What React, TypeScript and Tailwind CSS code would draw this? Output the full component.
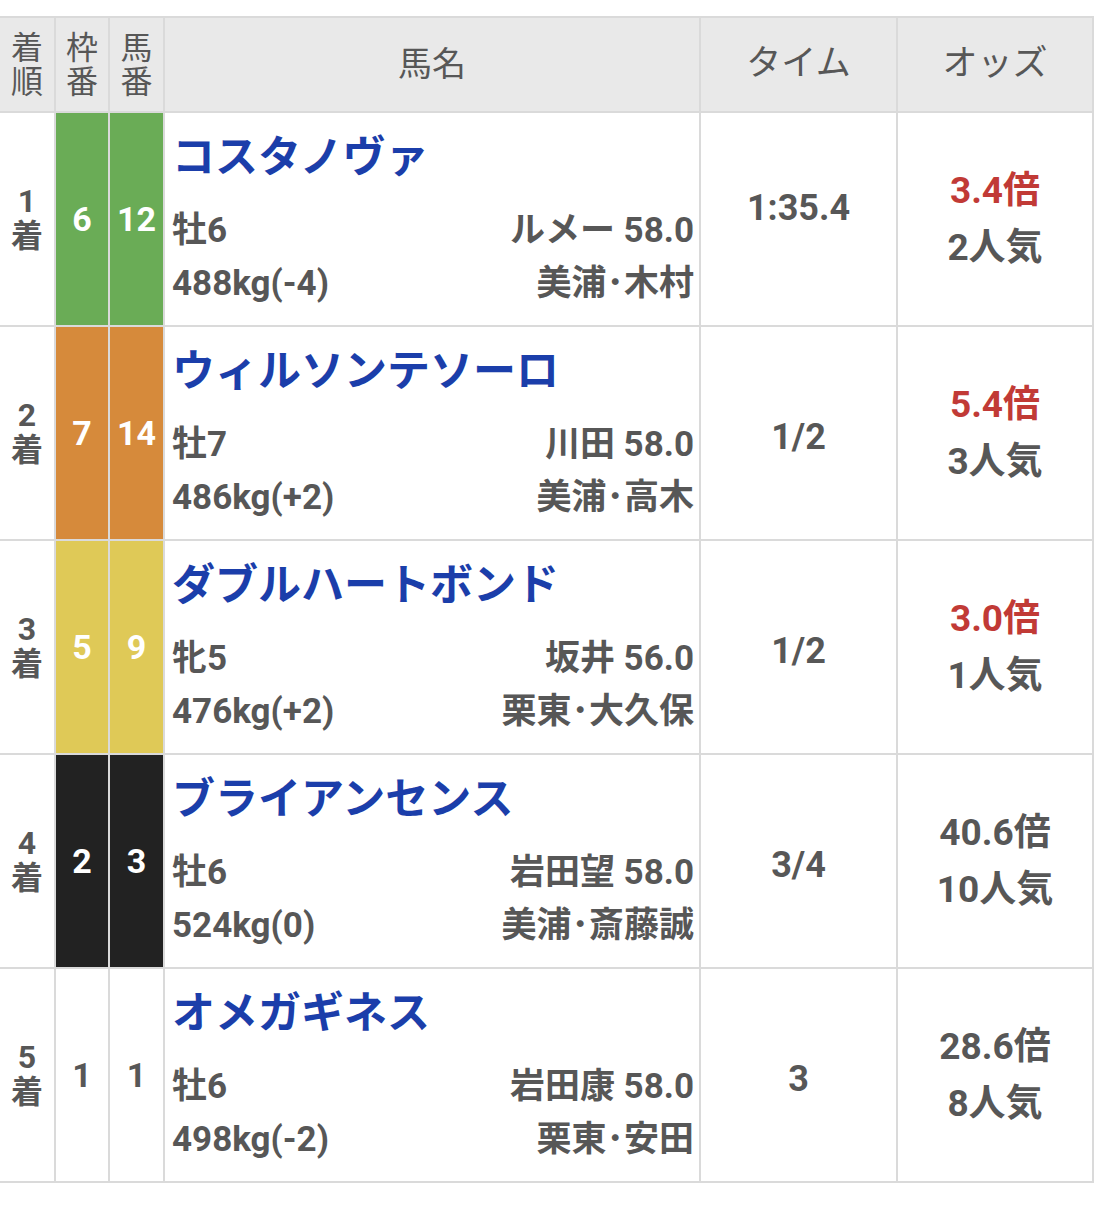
import React from "react";

type Row = {
  rank: string;
  waku: string;
  uma: string;
  color: string;
  name: string;
  sex: string;
  jockey: string;
  weight: string;
  stable: string;
  time: string;
  odds: string;
  pop: string;
  fav: boolean;
  timeLift?: boolean;
};

const rows: Row[] = [
  { rank: "1", waku: "6", uma: "12", color: "bg-[#6aac56]", name: "コスタノヴァ", sex: "牡6", jockey: "ルメー 58.0", weight: "488kg(-4)", stable: "美浦･木村", time: "1:35.4", odds: "3.4倍", pop: "2人気", fav: true, timeLift: true },
  { rank: "2", waku: "7", uma: "14", color: "bg-[#d68a3b]", name: "ウィルソンテソーロ", sex: "牡7", jockey: "川田 58.0", weight: "486kg(+2)", stable: "美浦･高木", time: "1/2", odds: "5.4倍", pop: "3人気", fav: true },
  { rank: "3", waku: "5", uma: "9", color: "bg-[#dfc957]", name: "ダブルハートボンド", sex: "牝5", jockey: "坂井 56.0", weight: "476kg(+2)", stable: "栗東･大久保", time: "1/2", odds: "3.0倍", pop: "1人気", fav: true },
  { rank: "4", waku: "2", uma: "3", color: "bg-[#222222]", name: "ブライアンセンス", sex: "牡6", jockey: "岩田望 58.0", weight: "524kg(0)", stable: "美浦･斎藤誠", time: "3/4", odds: "40.6倍", pop: "10人気", fav: false },
  { rank: "5", waku: "1", uma: "1", color: "bg-white", name: "オメガギネス", sex: "牡6", jockey: "岩田康 58.0", weight: "498kg(-2)", stable: "栗東･安田", time: "3", odds: "28.6倍", pop: "8人気", fav: false },
];

const font = { fontFamily: "Roboto, 'Noto Sans CJK JP', sans-serif" };

export default function App() {
  return (
    <div className="bg-white w-[1096px] h-[1214px] pt-[16px]" style={font}>
      <div className="w-[1094px] border-t-2 border-[#dadada] grid grid-cols-[56px_54px_55px_536px_197px_196px] text-[#575757]">
        {/* header */}
        <div className="h-[95px] bg-[#e9e9e9] border-r-2 border-b-2 border-[#dadada] flex flex-col items-center justify-center text-[32px] leading-[34px]">
          <span>着</span>
          <span>順</span>
        </div>
        <div className="h-[95px] bg-[#e9e9e9] border-r-2 border-b-2 border-[#dadada] flex flex-col items-center justify-center text-[32px] leading-[34px]">
          <span>枠</span>
          <span>番</span>
        </div>
        <div className="h-[95px] bg-[#e9e9e9] border-r-2 border-b-2 border-[#dadada] flex flex-col items-center justify-center text-[32px] leading-[34px]">
          <span>馬</span>
          <span>番</span>
        </div>
        <div className="h-[95px] bg-[#e9e9e9] border-r-2 border-b-2 border-[#dadada] flex items-center justify-center text-[34px]">
          馬名
        </div>
        <div className="h-[95px] bg-[#e9e9e9] border-r-2 border-b-2 border-[#dadada] flex items-center justify-center text-[35px]">
          タイム
        </div>
        <div className="h-[95px] bg-[#e9e9e9] border-r-2 border-b-2 border-[#dadada] flex items-center justify-center text-[35px]">
          オッズ
        </div>

        {rows.map((r) => (
          <React.Fragment key={r.rank}>
            <div className="h-[214px] border-r-2 border-b-2 border-[#dadada] flex flex-col items-center justify-center font-bold text-[32px] leading-[35px]">
              <span>{r.rank}</span>
              <span>着</span>
            </div>
            <div className={`h-[214px] border-r-2 border-b-2 border-[#dadada] flex items-center justify-center font-bold text-[34px] ${r.color} ${r.waku === "1" ? "text-[#575757]" : "text-white"}`}>
              {r.waku}
            </div>
            <div className={`h-[214px] border-r-2 border-b-2 border-[#dadada] flex items-center justify-center font-bold text-[34px] ${r.color} ${r.waku === "1" ? "text-[#575757]" : "text-white"}`}>
              {r.uma}
            </div>
            <div className="h-[214px] border-r-2 border-b-2 border-[#dadada] flex flex-col pl-[7px] pr-[5px] pt-[16px] font-bold">
              <div className="text-[43px] leading-[56px] text-[#1b3eaa] whitespace-nowrap">{r.name}</div>
              <div className="mt-[19px] flex justify-between text-[35px] leading-[53px]">
                <span>{r.sex}</span>
                <span>{r.jockey}</span>
              </div>
              <div className="flex justify-between text-[35px] leading-[53px]">
                <span>{r.weight}</span>
                <span>{r.stable}</span>
              </div>
            </div>
            <div className={`h-[214px] border-r-2 border-b-2 border-[#dadada] flex items-center justify-center font-bold text-[36px] ${r.timeLift ? "pb-[22px]" : "pt-[8px]"}`}>
              {r.time}
            </div>
            <div className="h-[214px] border-r-2 border-b-2 border-[#dadada] flex flex-col items-center justify-center font-bold text-[37px] leading-[57px]">
              <span className={r.fav ? "text-[#c13a36]" : ""}>{r.odds}</span>
              <span>{r.pop}</span>
            </div>
          </React.Fragment>
        ))}
      </div>
    </div>
  );
}
